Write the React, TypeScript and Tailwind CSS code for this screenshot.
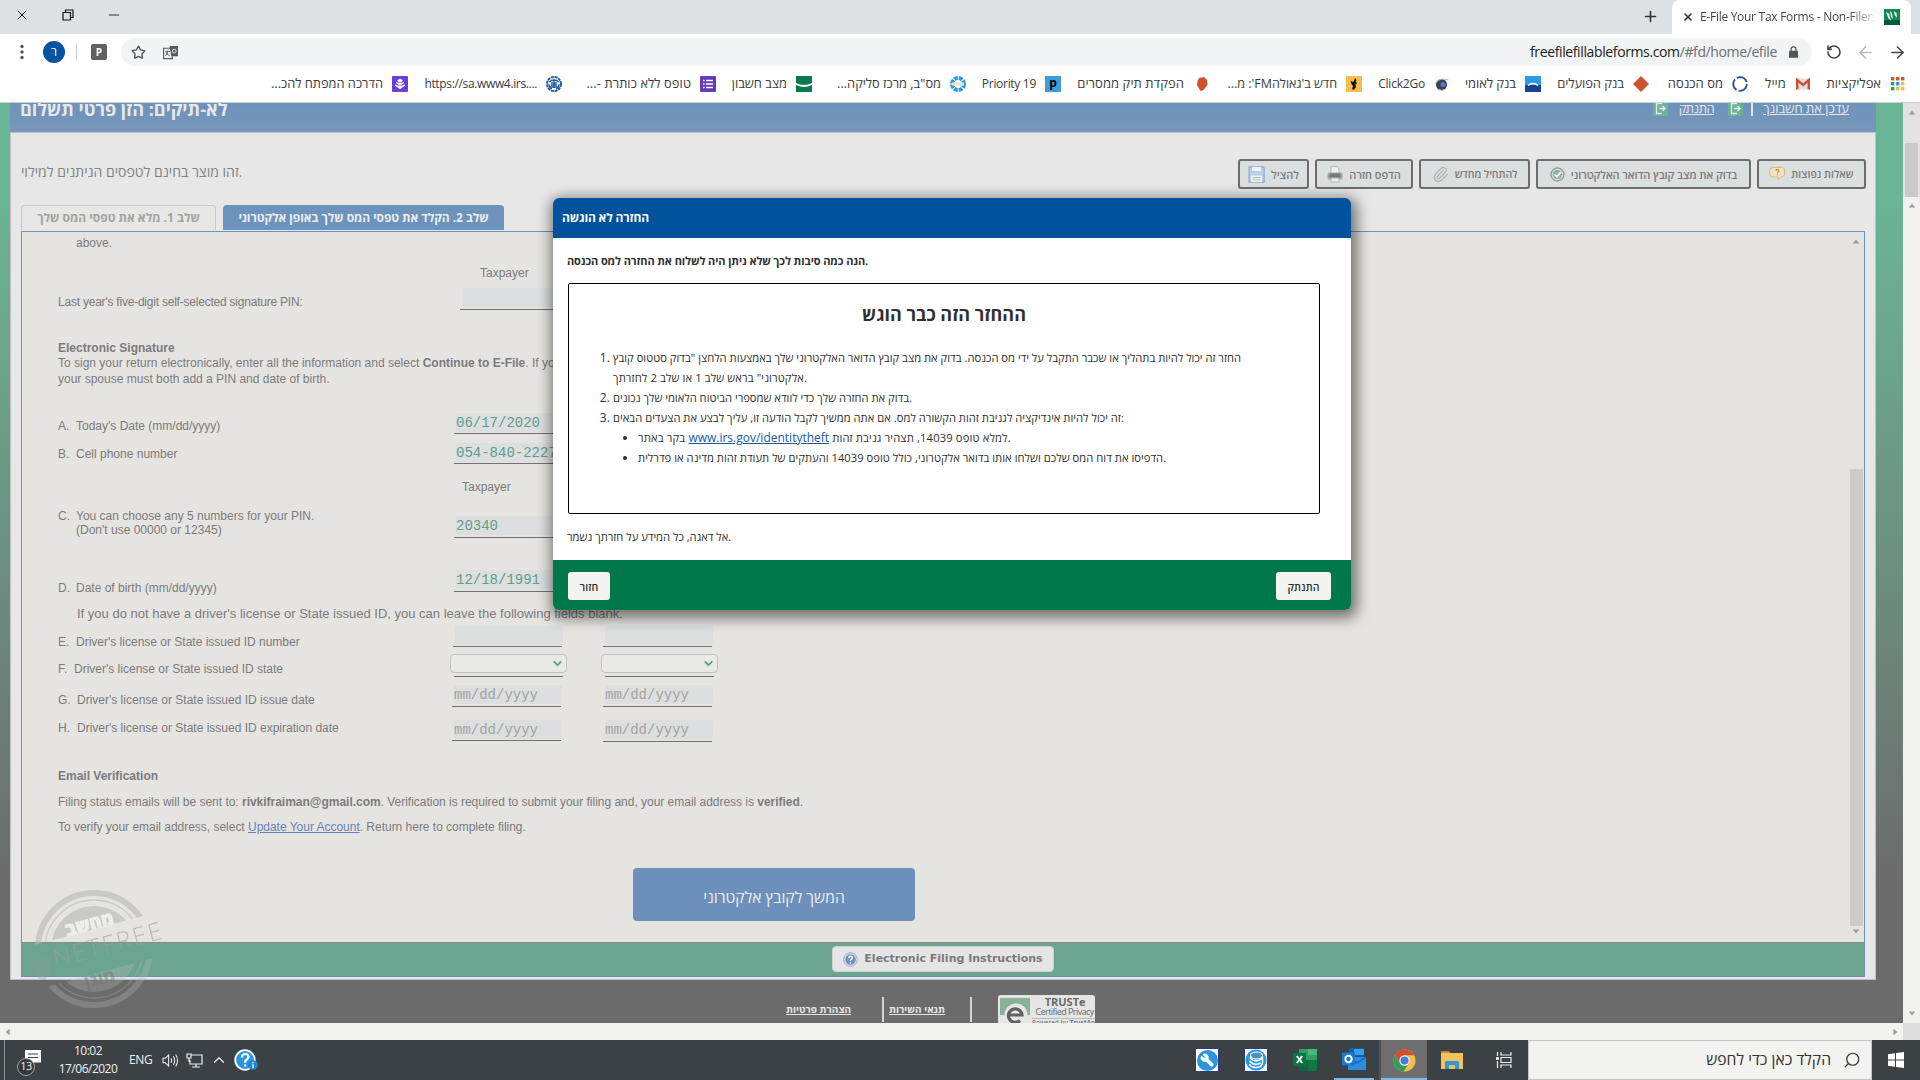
import type { ReactNode } from 'react';
import { ArrowLeft, ArrowRight, ChevronDown, ChevronUp, Minus, Paperclip, Plus, RotateCcw, Save, Search, Star, Wrench, X } from 'lucide-react';

const hebrew = "font-['Open_Sans','Liberation_Sans',sans-serif]";
const arial = "font-['Liberation_Sans',sans-serif]";

interface Bookmark {
  text: string;
  width: string;
  textClass: string;
  dir: 'rtl' | 'ltr';
  icon: ReactNode;
}

const bookmarks: Bookmark[] = [
  {
    text: 'אפליקציות',
    width: 'w-[95px]',
    textClass: 'text-[13px]',
    dir: 'rtl',
    icon: (
      <svg viewBox="0 0 16 16" className="w-4 h-4">
        {[0, 1, 2].map((c) => (
          <g key={c}>
            <rect x={1 + c * 5} y="1" width="3.4" height="3.4" fill="#cf5230" />
            <rect x={1 + c * 5} y="6" width="3.4" height="3.4" fill={['#2f9f63', '#2f9ae0', '#f5bd4f'][c]} />
            <rect x={1 + c * 5} y="11" width="3.4" height="3.4" fill={['#2f9f63', '#f5bd4f', '#f5bd4f'][c]} />
          </g>
        ))}
      </svg>
    ),
  },
  {
    text: 'מייל',
    width: 'w-[63px]',
    textClass: 'text-[13px] tracking-[0.1px]',
    dir: 'rtl',
    icon: (
      <svg viewBox="0 0 16 16" className="w-4 h-4">
        <rect x="1" y="2.5" width="14" height="11" rx="1" fill="#dedede" />
        <path d="M2.2 13.5V4l5.8 5 5.8-5v9.5" fill="none" stroke="#cf5230" strokeWidth="2.4" />
      </svg>
    ),
  },
  {
    text: 'מס הכנסה',
    width: 'w-[99px]',
    textClass: 'text-[13px]',
    dir: 'rtl',
    icon: (
      <svg viewBox="0 0 16 16" className="w-4 h-4">
        <circle cx="8" cy="8" r="6.8" fill="none" stroke="#2450a0" strokeWidth="1.8" strokeDasharray="12 2.24" />
      </svg>
    ),
  },
  {
    text: 'בנק הפועלים',
    width: 'w-[108px]',
    textClass: 'text-[13px] tracking-[-0.1px]',
    dir: 'rtl',
    icon: (
      <svg viewBox="0 0 16 16" className="w-4 h-4">
        <path d="M8 0l8 8-8 8-8-8z" fill="#cf5230" />
      </svg>
    ),
  },
  {
    text: 'בנק לאומי',
    width: 'w-[91px]',
    textClass: 'text-[13px] tracking-[-0.1px]',
    dir: 'rtl',
    icon: (
      <svg viewBox="0 0 16 16" className="w-4 h-4">
        <rect width="16" height="9" fill="#2f9ae0" />
        <rect y="9" width="16" height="7" fill="#1c3f94" />
        <path d="M3 9.5q5-4 10 0" fill="none" stroke="#fff" strokeWidth="1.5" />
      </svg>
    ),
  },
  {
    text: 'Click2Go',
    width: 'w-[88px]',
    textClass: 'text-[12px] tracking-[-0.2px]',
    dir: 'ltr',
    icon: (
      <svg viewBox="0 0 16 16" className="w-4 h-4">
        <circle cx="7.5" cy="8.5" r="5.5" fill="#3a3f55" />
        <circle cx="9" cy="8.5" r="2.5" fill="#5f78c4" />
        <path d="M1.500 7q5-6 13-3M3 13q5 3 9 0" fill="none" stroke="#b9b9b9" />
      </svg>
    ),
  },
  {
    text: "חדש ב'גאולהFM': מ...",
    width: 'w-[153px]',
    textClass: 'text-[12.5px]',
    dir: 'rtl',
    icon: (
      <svg viewBox="0 0 16 16" className="w-4 h-4">
        <rect width="16" height="16" fill="#f7bd4d" />
        <path d="M9 2l1.500 2-1 2 2 1-2 1 .5 3-2 3-2-1 1-3-1.500-2-1-3 3 1z" fill="#111" />
      </svg>
    ),
  },
  {
    text: 'הפקדת תיק ממסרים',
    width: 'w-[148px]',
    textClass: 'text-[13px] tracking-[0.05px]',
    dir: 'rtl',
    icon: (
      <svg viewBox="0 0 16 16" className="w-4 h-4">
        <path d="M6 2l5-1 3 3 .5 5-4 5-3 1-3.500-6 .5-4z" fill="#cf5230" />
      </svg>
    ),
  },
  {
    text: 'Priority 19',
    width: 'w-[95px]',
    textClass: 'text-[12px] tracking-[-0.3px]',
    dir: 'ltr',
    icon: <span className="flex w-4 h-4 bg-[#3d9cdb] items-center justify-center text-[12px] font-bold text-black leading-none pb-0.5">p</span>,
  },
  {
    text: 'מס"ב, מרכז סליקה...',
    width: 'w-[154px]',
    textClass: 'text-[12.8px]',
    dir: 'rtl',
    icon: (
      <svg viewBox="0 0 16 16" className="w-4 h-4">
        <circle cx="8" cy="8" r="6" fill="none" stroke="#2f9ae0" strokeWidth="4" strokeDasharray="3.8 0.92" />
        <rect x="2" y="6.5" width="12" height="3" fill="#e8e2c8" />
      </svg>
    ),
  },
  {
    text: 'מצב חשבון',
    width: 'w-[96px]',
    textClass: 'text-[12.8px]',
    dir: 'rtl',
    icon: (
      <svg viewBox="0 0 16 16" className="w-4 h-4">
        <rect width="16" height="16" fill="#067a4b" />
        <path d="M0 7q8 4 16 0v2q-8 4-16 0z" fill="#fff" />
      </svg>
    ),
  },
  {
    text: 'טופס ללא כותרת -...',
    width: 'w-[154px]',
    textClass: 'text-[12.8px] tracking-[0.1px]',
    dir: 'rtl',
    icon: (
      <svg viewBox="0 0 16 16" className="w-4 h-4">
        <rect width="16" height="16" rx="1" fill="#673ab7" />
        <path d="M3 4.500h1.600M3 8h1.600M3 11.500h1.600M6 4.500h7M6 8h7M6 11.500h7" stroke="#fff" strokeWidth="1.6" />
      </svg>
    ),
  },
  {
    text: 'https://sa.www4.irs....',
    width: 'w-[154px]',
    textClass: 'text-[12px] tracking-[-0.35px]',
    dir: 'ltr',
    icon: (
      <svg viewBox="0 0 16 16" className="w-4 h-4">
        <circle cx="8" cy="8" r="7" fill="none" stroke="#1f5a9e" strokeWidth="2" strokeDasharray="3 0.7" />
        <path d="M3 6q5-4 10 0M8 3v9M5 7h6M4 11h8M5 9h6M3 8q0 4 3 5M13 8q0 4-3 5" fill="none" stroke="#1f5a9e" strokeWidth="1.3" />
      </svg>
    ),
  },
  {
    text: 'הדרכה המפתח להכ...',
    width: 'w-[154px]',
    textClass: 'text-[12.8px]',
    dir: 'rtl',
    icon: (
      <svg viewBox="0 0 16 16" className="w-4 h-4">
        <rect width="16" height="16" rx="1" fill="#673fdb" />
        <path d="M8 3l2.500 1.600L8 6.200 5.500 4.600zM8 7.500l4-1-4 2.700-4-2.700zM8 10.500l5-1.500-5 3.800L3 9z" fill="#fff" stroke="#fff" strokeWidth=".8" />
      </svg>
    ),
  },
];

function BrowserChrome() {
  return (
    <div className="shrink-0">
      <div className="flex h-[34px] bg-[#dde1e4] text-[#111] justify-between">
        <div className="flex items-center pl-[14px] gap-[29px] pb-[5px]">
          <X className="w-[16px] h-[16px]" strokeWidth={1.5} />
          <svg viewBox="0 0 12 12" className="w-[12px] h-[12px] ml-[3px]" fill="none" stroke="#111" strokeWidth="1.2">
            <path d="M1 3.500h7.500V11H1zM3.500 3.500V1H11v7.500H8.500" />
          </svg>
          <Minus className="w-[16px] h-[16px] ml-[3px]" strokeWidth={1.3} />
        </div>
        <div className="flex">
          <Plus className="w-[17px] h-[17px] mt-2 mr-[13px] text-[#333]" strokeWidth={2.2} />
          <div className="flex w-[239px] bg-white rounded-t-lg items-center pl-[10px] mr-[9px]">
            <X className="w-[12px] h-[12px] text-[#333] shrink-0" strokeWidth={3.2} />
            <span className="ml-[6px] w-[175px] overflow-hidden whitespace-nowrap text-[12px] tracking-[-0.28px] bg-gradient-to-r from-[#3c4043] from-85% to-[#3c404322] bg-clip-text text-transparent">
              E-File Your Tax Forms - Non-Filers
            </span>
            <svg viewBox="0 0 16 16" className="w-4 h-4 ml-[9px]">
              <rect width="16" height="16" fill="#0f8a52" />
              <path d="M0 11h16v5H0z" fill="#0a5a3a" />
              <path d="M2 3l3 1.500 2 7-2.500-2zM6 2l2 2 1 6-2-2zM10 2l2.500 2 .5 5-2.500-3z" fill="#e9f4ee" />
            </svg>
          </div>
        </div>
      </div>

      <div className="flex h-[36px] bg-white items-center">
        <svg viewBox="0 0 4 16" className="w-1 h-4 ml-5" fill="#555">
          <circle cx="2" cy="2.5" r="1.7" />
          <circle cx="2" cy="8" r="1.7" />
          <circle cx="2" cy="13.5" r="1.7" />
        </svg>
        <div className="w-[22px] h-[22px] rounded-full bg-[#0353a0] text-white text-[12px] ml-[19px] flex items-center justify-center">ר</div>
        <div className="w-px h-4 bg-[#c8c8c8] ml-[11px]" />
        <div className="w-4 h-4 rounded-[2px] bg-[#5f6061] text-white text-[10px] font-bold ml-[14px] flex items-center justify-center">P</div>
        <div className="flex flex-1 h-[28px] rounded-full bg-[#f1f3f4] items-center justify-between ml-[14px] pl-[10px] pr-[13px]">
          <div className="flex items-center gap-[17px]">
            <Star className="w-[15px] h-[15px] text-[#555]" strokeWidth={2.2} />
            <svg viewBox="0 0 16 16" className="w-[15px] h-[15px]">
              <path d="M7 1h9v11H9z" fill="#5a5a5a" />
              <path d="M.6 3.500h7.400l2 11H.6z" fill="#f1f3f4" stroke="#5a5a5a" strokeWidth="1.2" />
              <path d="M2.500 7h5M5 6v1q-.5 3-2.500 4.500M3.500 8q1 2.500 3.500 3.500" fill="none" stroke="#5a5a5a" />
              <circle cx="12" cy="6.5" r="2" fill="none" stroke="#f1f3f4" />
            </svg>
          </div>
          <div className="flex items-center gap-[12px]">
            <span className="text-[14px] tracking-[-0.38px] text-[#6b6f73] pb-px">
              <span className="text-[#222]">freefilefillableforms.com</span>/#fd/home/efile
            </span>
            <svg viewBox="0 0 10 13" className="w-[9px] h-[12px] mr-px">
              <rect y="5" width="10" height="8" rx="1" fill="#555" />
              <path d="M2.300 5.500V3.500a2.700 2.700 0 015.400 0v2" fill="none" stroke="#555" strokeWidth="1.4" />
            </svg>
          </div>
        </div>
        <RotateCcw className="w-4 h-4 text-[#444] ml-[14px]" strokeWidth={2.4} />
        <ArrowLeft className="w-[19px] h-[19px] text-[#b9b9b9] ml-[14px]" strokeWidth={2} />
        <ArrowRight className="w-[19px] h-[19px] text-[#444] ml-[13px] mr-[13px]" strokeWidth={2} />
      </div>

      <div dir="rtl" className="flex h-[33px] bg-white border-b border-[#cfcfcf] pr-[14px] items-center pb-1 text-[#3a3d40]">
        {bookmarks.map((b) => (
          <div key={b.text} className={`flex items-center gap-[9px] shrink-0 ${b.width}`}>
            {b.icon}
            <span dir={b.dir} className={`whitespace-nowrap ${b.textClass}`}>
              {b.text}
            </span>
          </div>
        ))}
      </div>
    </div>
  );
}

function LogoutIcon() {
  return (
    <svg viewBox="0 0 15 15" className="w-[15px] h-[15px]">
      <rect width="15" height="15" rx="1" fill="#6bb395" />
      <path d="M9 2.500H3.500v10H9M6 7.500h6M9.500 5L12 7.500 9.500 10" fill="none" stroke="#e9e9e9" strokeWidth="1.3" />
    </svg>
  );
}

function PrinterIcon() {
  return (
    <svg viewBox="0 0 16 17" className="w-4 h-[17px]">
      <path d="M4 .5h6l2 2.500v6H4z" fill="#f0f0f0" stroke="#aaa" strokeWidth=".8" />
      <rect x=".5" y="6.5" width="15" height="7" rx="1.5" fill="#a6a6a6" />
      <rect x="2.5" y="7.5" width="11" height="4" fill="#777" />
      <path d="M4 12h8v4H4z" fill="#eee" stroke="#aaa" strokeWidth=".8" />
    </svg>
  );
}

function FloppyIcon() {
  return (
    <svg viewBox="0 0 17 17" className="w-[17px] h-[17px]">
      <path d="M1 .8h14l1.200 1.200v14.200H1z" fill="#b9d0e4" stroke="#8bb0d2" strokeWidth="1.2" />
      <rect x="4" y="1" width="9" height="4" fill="#eef2f5" />
      <rect x="3" y="9.5" width="11" height="6.5" fill="#f0f1f1" />
      <path d="M4.500 11.500h8M4.500 13.800h8" stroke="#b5b5b5" />
    </svg>
  );
}

const toolbar: { text: string; width: string; textClass: string; icon: ReactNode }[] = [
  { text: 'להציל', width: 'w-[71px]', textClass: 'text-[11px]', icon: <FloppyIcon /> },
  { text: 'הדפס חזרה', width: 'w-[98px]', textClass: 'text-[11px] tracking-[-0.1px]', icon: <PrinterIcon /> },
  {
    text: 'להתחיל מחדש',
    width: 'w-[111px]',
    textClass: 'text-[10.5px] tracking-[-0.1px]',
    icon: <Paperclip className="w-[17px] h-[17px] text-[#aaa]" strokeWidth={1.5} />,
  },
  {
    text: 'בדוק את מצב קובץ הדואר האלקטרוני',
    width: 'w-[215px]',
    textClass: 'text-[11px] tracking-[-0.1px]',
    icon: (
      <svg viewBox="0 0 16 16" className="w-[15px] h-[15px]">
        <circle cx="8" cy="8" r="7" fill="#cfd6d3" stroke="#8f9a96" strokeWidth="1.4" />
        <circle cx="8" cy="8" r="4.8" fill="#8fb0a2" />
        <path d="M5 8l2.300 2.500L11.500 5.500" fill="none" stroke="#fff" strokeWidth="1.8" />
      </svg>
    ),
  },
  {
    text: 'שאלות נפוצות',
    width: 'w-[109px]',
    textClass: 'text-[10.5px]',
    icon: (
      <svg viewBox="0 0 16 16" className="w-4 h-4">
        <path d="M4 1.500h9a2.500 2.500 0 012.500 2.500v4a2.500 2.500 0 01-2.500 2.500h-1L9 14v-3H4A3 3 0 01.8 8V4.500a3 3 0 013.200-3z" fill="#f3e3c4" stroke="#d8b98a" />
        <path d="M6.800 4.500q1.700-2 3 0 .3 1.200-1.500 2.200M8.300 8.200v1" fill="none" stroke="#c4914c" strokeWidth="1.3" />
      </svg>
    ),
  },
];

interface FieldProps {
  value?: string;
  placeholder?: string;
  className?: string;
  gap?: string;
}

function Field({ value, placeholder, className = '', gap = 'pb-px' }: FieldProps) {
  return (
    <div className={`w-[109px] h-fit border-b border-[#6f7072] ${gap} ${className}`}>
      <div className="ml-[2px] -mr-[1px] h-[19px] rounded-[3px] bg-[#dcdedf] font-['Liberation_Mono',monospace] text-[14px] leading-[21px] text-[#5e9f8a] whitespace-nowrap">
        {value}
        {placeholder && <span className="text-[#a3a39d]">{placeholder}</span>}
      </div>
    </div>
  );
}

function SelectField({ className = '' }: { className?: string }) {
  return (
    <div className={`w-[117px] h-[22px] flex justify-center -ml-[3px] ${className}`}>
      <div className="w-[109px] border-b border-[#6f7072] h-[23px]">
        <div className="w-[117px] -ml-[4px] h-[19px] rounded-[4px] border border-[#c2c2c0] bg-[#e9e9e7] flex items-center justify-end pr-[2px]">
          <ChevronDown className="w-[13px] h-[13px] text-[#5aa386]" strokeWidth={3.5} />
        </div>
      </div>
    </div>
  );
}

interface RowProps {
  letter: string;
  label: ReactNode;
  height: string;
  labelTop: string;
  children: ReactNode;
}

function Row({ letter, label, height, labelTop, children }: RowProps) {
  return (
    <div className={`flex items-start ${height}`}>
      <div className={`flex w-[395px] shrink-0 ${labelTop}`}>
        <span className="w-[18px]">{letter}.</span>
        <span>{label}</span>
      </div>
      {children}
    </div>
  );
}

function ScrollArrow({ dir }: { dir: 'up' | 'down' | 'left' | 'right' }) {
  const shapes = { up: 'M5 2l4 5H1z', down: 'M1 2h8L5 7z', left: 'M7 1v8L2 5z', right: 'M3 1l5 4-5 4z' };
  return (
    <svg viewBox="0 0 10 10" className="w-[8px] h-[8px] shrink-0" fill="#9b9b9b">
      <path d={shapes[dir]} />
    </svg>
  );
}

function TaxForm() {
  return (
    <div className={`flex flex-col flex-1 pl-[36px] text-[12px] leading-4 text-[#7b7b7d] whitespace-nowrap ${arial}`}>
      <div className="h-[22px] pl-[18px] pt-[3px]">above.</div>
      <div className="h-[34px] pl-[422px] pt-[11px]">Taxpayer</div>
      <div className="flex h-[22px]">
        <div className="w-[402px] pt-[6px] tracking-[-0.22px]">Last year's five-digit self-selected signature PIN:</div>
        <Field gap="pb-[2px]" />
      </div>
      <div className="h-[99px] pt-[30px]">
        <p className="font-bold">Electronic Signature</p>
        <p className="leading-[15px]">
          To sign your return electronically, enter all the information and select <b>Continue to E-File</b>. If you are filing jointly, you and
        </p>
        <p>your spouse must both add a PIN and date of birth.</p>
      </div>
      <Row letter="A" label="Today's Date (mm/dd/yyyy)" height="h-[31px]" labelTop="pt-[9px]">
        <Field value="06/17/2020" className="mt-[4px] ml-px" />
      </Row>
      <Row letter="B" label="Cell phone number" height="h-[30px]" labelTop="pt-[6px]">
        <Field value="054-840-2227" className="mt-[3px] ml-px" />
      </Row>
      <div className="h-[35px] pl-[404px] pt-[9px]">Taxpayer</div>
      <Row
        letter="C"
        height="h-[55px]"
        labelTop="pt-[4px] leading-[14px]"
        label={
          <>
            You can choose any 5 numbers for your PIN.
            <br />
            (Don't use 00000 or 12345)
          </>
        }
      >
        <Field value="20340" className="mt-[11px] ml-px" gap="pb-[2px]" />
      </Row>
      <Row letter="D" label="Date of birth (mm/dd/yyyy)" height="h-[40px]" labelTop="pt-[20px]">
        <Field value="12/18/1991" className="mt-[10px] ml-px" gap="pb-[2px]" />
      </Row>
      <div className="h-[24px] pl-[19px] pt-[6px] text-[13px]">
        If you do not have a driver's license or State issued ID, you can leave the following fields blank.
      </div>
      <Row letter="E" label="Driver's license or State issued ID number" height="h-[28px]" labelTop="pt-[10px]">
        <Field className="mt-[2px]" />
        <Field className="mt-[2px] ml-[41px]" />
      </Row>
      <Row letter="F" label={<span className="-ml-0.5">Driver's license or State issued ID state</span>} height="h-[30px]" labelTop="pt-[9px]">
        <SelectField className="mt-[2px]" />
        <SelectField className="mt-[2px] ml-[34px]" />
      </Row>
      <Row letter="G" label={<span className="ml-px">Driver's license or State issued ID issue date</span>} height="h-[34px]" labelTop="pt-[10px]">
        <Field placeholder="mm/dd/yyyy" className="mt-[3px] -ml-px" gap="pb-[2px]" />
        <Field placeholder="mm/dd/yyyy" className="mt-[3px] ml-[42px]" gap="pb-[2px]" />
      </Row>
      <Row letter="H" label={<span className="ml-px">Driver's license or State issued ID expiration date</span>} height="h-[44px]" labelTop="pt-[4px]">
        <Field placeholder="mm/dd/yyyy" className="mt-[4px] -ml-px" />
        <Field placeholder="mm/dd/yyyy" className="mt-[4px] ml-[42px]" gap="pb-[2px]" />
      </Row>
      <p className="h-[32px] pt-[8px] font-bold">Email Verification</p>
      <p className="h-[25px] pt-[2px] tracking-[-0.02px]">
        Filing status emails will be sent to: <b>rivkifraiman@gmail.com</b>. Verification is required to submit your filing and, your email address is <b>verified</b>.
      </p>
      <p className="h-[26px] pt-[2px] tracking-[-0.02px]">
        To verify your email address, select <a className="text-[#6583b8] underline">Update Your Account</a>. Return here to complete filing.
      </p>
      <button className={`mt-[25px] ml-[575px] w-[282px] h-[53px] pt-[4px] rounded-[4px] bg-[#6c8fbc] text-[#ececec] text-[15.700px] ${hebrew}`}>המשך לקובץ אלקטרוני</button>
    </div>
  );
}

function SubmissionModal() {
  return (
    <div className="absolute left-[553px] top-[198px] w-[798px] h-[412px] flex flex-col rounded-[6px] overflow-hidden bg-white shadow-[2px_4px_14px_4px_rgba(0,0,0,0.5)] text-[#2f2f2f] text-[11.2px] leading-5">
      <div className="h-[40px] shrink-0 bg-[#00529c] text-white font-bold text-[12px] tracking-[-0.15px] flex items-center pl-[9px]">החזרה לא הוגשה</div>
      <div className="flex-1 pl-[15px] pr-[31px] pt-[13px]">
        <p className="font-bold text-[11px] tracking-[-0.1px] -ml-px">הנה כמה סיבות לכך שלא ניתן היה לשלוח את החזרה למס הכנסה.</p>
        <div className="mt-[12px] h-[231px] border border-black rounded-[2px] pt-[16px] pl-[44px]">
          <h2 className="text-center text-[18px] font-bold leading-7 mr-[44px]">ההחזר הזה כבר הוגש</h2>
          <ol className="mt-[20px] whitespace-nowrap list-decimal marker:text-[12px]">
            <li>
              החזר זה יכול להיות בתהליך או שכבר התקבל על ידי מס הכנסה. בדוק את מצב קובץ הדואר האלקטרוני שלך באמצעות הלחצן "בדוק סטטוס קובץ
              <br />
              <span className="tracking-[0.12px]">אלקטרוני" בראש שלב 1 או שלב 2 לחזרתך.</span>
            </li>
            <li>בדוק את החזרה שלך כדי לוודא שמספרי הביטוח הלאומי שלך נכונים.</li>
            <li>
              <span className="tracking-[0.02px]">זה יכול להיות אינדיקציה לגניבת זהות הקשורה למס. אם אתה ממשיך לקבל הודעה זו, עליך לבצע את הצעדים הבאים:</span>
              <ul className="list-disc pl-[25px]">
                <li>
                  <span className="tracking-[0.15px]">בקר באתר </span>
                  <a className="text-[12px] leading-none text-[#1a5a9e] underline">www.irs.gov/identitytheft</a>
                  <span className="tracking-[0.15px]"> למלא טופס 14039, תצהיר גניבת זהות.</span>
                </li>
                <li className="tracking-[0.03px]">הדפיסו את דוח המס שלכם ושלחו אותו בדואר אלקטרוני, כולל טופס 14039 והעתקים של תעודת זהות מדינה או פדרלית.</li>
              </ul>
            </li>
          </ol>
        </div>
        <p className="mt-[13px] -ml-px">אל דאגה, כל המידע על חזרתך נשמר.</p>
      </div>
      <div className="h-[50px] shrink-0 bg-[#00784c] flex items-center justify-between pl-[15px] pr-[20px] pt-px text-[10.5px] font-semibold">
        <button className="w-[42px] h-[28px] rounded-[3px] bg-[#f3f3f1] pt-[3px]">חזור</button>
        <button className="w-[55px] h-[28px] rounded-[3px] bg-[#f3f3f1] pt-[3px]">התנתק</button>
      </div>
    </div>
  );
}

function Watermark() {
  return (
    <svg viewBox="-70 -70 150 140" className={`absolute left-[24px] top-[879px] w-[150px] h-[140px] opacity-60 ${hebrew}`}>
      <defs>
        <clipPath id="aboveBand">
          <path d="M-80-80H90V-44L-80 1.600z" />
        </clipPath>
        <clipPath id="belowBand">
          <path d="M-80 46.500L90 1V80H-80z" />
        </clipPath>
      </defs>
      {['aboveBand', 'belowBand'].map((clip) => (
        <g key={clip} clipPath={`url(#${clip})`} opacity={clip === 'aboveBand' ? 1 : 0.5}>
          <circle r="56" fill="none" stroke="#b8b8b8" strokeWidth="6" />
          <circle r="49" fill="none" stroke="#b8b8b8" strokeWidth="1.3" />
          <circle r="43" fill="#b8b8b8" />
        </g>
      ))}
      <g transform="rotate(-15)">
        <text x="2" y="-19" textAnchor="middle" fontSize="18" fontWeight="800" fill="#f4f4f2" stroke="#f4f4f2" strokeWidth=".8">מחשב</text>
        <text x="-2" y="36" textAnchor="middle" fontSize="17" fontWeight="800" fill="#7c8a84">מוגן</text>
        <text x="-42" y="8" fontSize="25" fontWeight="300" fill="#9aa09d" textLength="112">NETFREE</text>
        <path d="M-66-2l10-4 10 4q1 14-10 19-11-5-10-19z" fill="#8a9a94" opacity=".6" />
      </g>
    </svg>
  );
}

function WebPage() {
  return (
    <div className="flex h-[920px] shrink-0">
      <div className="w-[1903px] flex flex-col bg-gradient-to-b from-[#6bb597] from-10% via-[#6b8f81] via-50% to-[#6b6b6b] to-85% pl-[10px] pr-[27px] overflow-hidden">
        <header className="flex h-[29px] shrink-0 bg-gradient-to-b from-[#6c93bb] to-[#7896bb] text-[#e8e8e8] justify-between overflow-hidden">
          <h1 className="text-[18px] font-bold leading-6 pl-[10px] -mt-[6px]">לא-תיקים: הזן פרטי תשלום</h1>
          <div className="flex text-[13px] leading-[14px] pr-[27px] -mt-[2px]">
            <LogoutIcon />
            <a className="underline ml-[11px] tracking-[-0.5px]">התנתק</a>
            <span className="ml-[14px]">
              <LogoutIcon />
            </span>
            <span className="w-[2px] h-[13px] bg-[#e3e3e3] ml-[8px] mt-[2px]" />
            <a className="underline ml-[10px]">עדכן את חשבונך</a>
          </div>
        </header>

        <main className="h-[848px] shrink-0 flex flex-col bg-[#e7e7e7] border border-[#bfbfbf] px-[10px]">
          <div className="flex justify-between pt-[26px] h-[72px]">
            <p className="text-[14px] text-[#828282] leading-5 pt-[3px]">זהו מוצר בחינם לטפסים הניתנים למילוי.</p>
            <div className="flex gap-[6px] -mr-px">
              {toolbar.map((item) => (
                <button
                  key={item.text}
                  className={`h-[30px] border-2 border-[#6d6d6d] rounded-[3px] bg-[#dcdfe0] flex items-center justify-center gap-[6px] font-semibold text-[#7d7a76] whitespace-nowrap ${item.width} ${item.textClass}`}
                >
                  {item.icon}
                  <span className="pt-[2px]">{item.text}</span>
                </button>
              ))}
            </div>
          </div>

          <div className="flex h-[26px] gap-[7px] text-[12px] font-bold">
            <div className="w-[195px] h-[25px] rounded-t-[4px] border border-b-0 border-[#c6c9c6] text-[#a2a49a] flex items-center justify-center">שלב 1. מלא את טפסי המס שלך</div>
            <div className="w-[281px] h-[25px] rounded-t-[4px] bg-[#6c93bb] text-[#ececec] flex items-center justify-center tracking-[-0.06px]">שלב 2. הקלד את טפסי המס שלך באופן אלקטרוני</div>
          </div>

          <div className="h-[746px] shrink-0 flex flex-col border border-[#6c93bb] bg-[#e5e4e0]">
            <div className="flex flex-1">
              <TaxForm />
              <div className="w-[16px] flex flex-col items-center justify-between py-[6px] bg-[#e4e4e2]">
                <ScrollArrow dir="up" />
                <div className="w-[13px] h-[457px] bg-[#cbcbca] mt-[220px]" />
                <ScrollArrow dir="down" />
              </div>
            </div>
            <div className="h-[34px] shrink-0 border-t border-[#868c88] bg-[#6ba592] flex justify-center">
              <button className="w-[222px] h-[26px] mt-[3px] rounded-[4px] bg-[#e5e5e5] border border-[#cfcfcf] flex items-center justify-center gap-[6px] text-[#7a7a7a] font-['DejaVu_Sans',sans-serif] text-[11px] font-bold whitespace-nowrap">
                <svg viewBox="0 0 16 16" className="w-[15px] h-[15px] mt-px">
                  <circle cx="8" cy="8" r="7.3" fill="#d5dbe2" stroke="#a7adb5" />
                  <circle cx="8" cy="8" r="5.5" fill="#6d94c0" />
                  <path d="M6 6.500q.3-2 2-2t2 1.500q0 1.200-2 2.500v1M8 11v1.200" fill="none" stroke="#fff" strokeWidth="1.4" />
                </svg>
                Electronic Filing Instructions
              </button>
            </div>
          </div>
        </main>

        <footer className="flex pl-[776px] text-[10px] font-bold text-[#e6e6e6]">
          <a className="underline mt-[21px] w-[96px] leading-4">הצהרת פרטיות</a>
          <span className="w-[2px] h-[25px] mt-[17px] bg-[#d5d5d5]" />
          <a className="underline mt-[21px] ml-[5px] w-[81px] leading-4">תנאי השירות</a>
          <span className="w-[2px] h-[25px] mt-[17px] bg-[#d5d5d5]" />
          <div className="w-[97px] h-[40px] ml-[26px] mt-[15px] rounded-[3px] bg-[#e4e5e4] flex text-[#6a6a6a] overflow-hidden">
            <svg viewBox="0 0 34 34" className="w-[34px] h-[34px] shrink-0">
              <rect x="2" y="3" width="30" height="17" fill="#88b295" />
              <circle cx="18" cy="20" r="11.5" fill="#e4e5e4" />
              <path d="M12 20h12a6.800 6.800 0 10-2 5.500" fill="none" stroke="#626262" strokeWidth="3.2" />
            </svg>
            <div className="pt-[1px] text-center whitespace-nowrap">
              <div className="text-[11px] leading-[11px] pl-px">TRUSTe</div>
              <div className="text-[9px] leading-[10px] font-normal tracking-[-0.55px]">Certified Privacy</div>
              <div className="text-[6.500px] leading-[7px] font-normal mt-px border-t border-[#bbb]">
                Powered by <b className="text-[#5f7fa5]">TrustArc</b>
              </div>
            </div>
          </div>
        </footer>
      </div>

      <div className="w-[17px] flex flex-col items-center bg-[#f2f2f0]">
        <div className="w-full h-[40px] bg-[#e3e3e3] flex justify-center pt-[6px]">
          <ScrollArrow dir="up" />
        </div>
        <div className="w-[13px] h-[54px] bg-[#c9c9c9] shadow-[0_0_0_2px_#e3e3e3]" />
        <div className="flex-1 w-full flex flex-col items-center justify-between bg-[#f2f2f0] pt-[5px] pb-[5px]">
          <ScrollArrow dir="up" />
          <ScrollArrow dir="down" />
        </div>
      </div>
    </div>
  );
}

function Taskbar() {
  return (
    <div className="flex h-[40px] shrink-0 bg-[#3c4145] text-[#f0f0f0] items-center justify-between">
      <div className="flex items-center h-full text-[12px]">
        <div className="w-px h-full bg-[#8b8e90] ml-1" />
        <div className="relative ml-[20px] w-4 h-[17px] mb-1">
          <svg viewBox="0 0 16 17" className="w-4 h-[17px]">
            <path d="M0 0h16v12.500H9l-4 4v-4H0z" fill="#fff" />
            <path d="M3 4h10M3 7.500h10" stroke="#3c4145" strokeWidth="1.2" />
          </svg>
          <span className="absolute -left-[8px] top-[8px] w-[18px] h-[18px] rounded-full bg-[#33383b] border border-[#a5a5a5] text-[11px] tracking-[-0.5px] flex items-center justify-center">13</span>
        </div>
        <div className="w-[60px] ml-[17px] text-center leading-[18px] tracking-[-0.5px]">
          <div>10:02</div>
          <div>17/06/2020</div>
        </div>
        <span className="ml-[11px] tracking-[-0.4px]">ENG</span>
        <svg viewBox="0 0 18 16" className="w-[17px] h-[15px] ml-[10px]" fill="none" stroke="#eee" strokeWidth="1.1">
          <path d="M1 5.500h2.500L7 2v12l-3.500-3.500H1zM9.500 5.500q1.500 2.500 0 5M12 3.500q3 4.500 0 9M14.500 1.500q4 6.500 0 13" />
        </svg>
        <svg viewBox="0 0 17 15" className="w-[17px] h-[15px] ml-[7px]" fill="none" stroke="#eee" strokeWidth="1.2">
          <path d="M5 2h11v9H4V7M10 11v3M6 14h8M1 1h4v4H1zM3 5v4" />
        </svg>
        <ChevronUp className="w-[18px] h-[18px] ml-[7px]" strokeWidth={1.6} />
        <svg viewBox="0 0 24 22" className="w-[24px] h-[22px] ml-[6px]">
          <circle cx="11" cy="11" r="9.8" fill="#2a96dc" stroke="#fff" strokeWidth="1.8" />
          <path d="M7.800 8.500q.3-3.500 3.400-3.500t3.300 2.800q0 2-3.300 4v2M11.200 15.500v2" fill="none" stroke="#fff" strokeWidth="2.2" />
          <circle cx="19" cy="16" r="4.8" fill="#1f86d0" />
          <path d="M19 13v1.200M19 15.200v4" stroke="#fff" strokeWidth="1.3" />
        </svg>
      </div>

      <div className="flex items-center h-full">
        <div className="flex w-6 h-6 bg-white border border-[#2b3a8f] items-center justify-center mr-[25px]">
          <span className="w-[21px] h-[21px] rounded-full bg-[#2a96dc] flex items-center justify-center">
            <Wrench className="w-[14px] h-[14px] text-white fill-white -scale-x-100" />
          </span>
        </div>
        <svg viewBox="0 0 24 24" className="w-6 h-6 mr-[25px]">
          <rect x=".5" y=".5" width="23" height="23" fill="#fff" stroke="#2b3a8f" />
          <circle cx="12" cy="12" r="10.5" fill="#2a96dc" />
          <ellipse cx="12.5" cy="7.5" rx="6" ry="3.5" fill="#4c8fc0" stroke="#fff" strokeWidth="1.2" />
          <path d="M6.500 8v2.500q6 5 12-.5v5q-1 4.500-6.500 4.500T5.500 16M5.500 13q5 5.500 11 2" fill="none" stroke="#fff" strokeWidth="1.5" />
        </svg>
        <svg viewBox="0 0 24 22" className="w-6 h-[22px] mr-[17px]">
          <rect x="6" width="18" height="22" fill="#2fa061" />
          <path d="M15 0h9v6h-9z" fill="#49b97b" />
          <path d="M6 11h9v11H6z" fill="#12663c" />
          <path d="M15 11h9v11h-9z" fill="#0d7a45" />
          <rect y="4" width="13" height="13" fill="#0a7443" />
          <path d="M3.800 7l5.400 7M9.200 7l-5.400 7" stroke="#fff" strokeWidth="1.9" />
        </svg>
        <div className="w-[40px] h-full border-b-2 border-[#86b8dd] flex items-center justify-center">
          <svg viewBox="0 0 24 22" className="w-6 h-[22px]">
            <path d="M7 0h15v9H7z" fill="#0f5fb0" />
            <path d="M12 1h10v6H12z" fill="#3aa0e6" />
            <path d="M6 9h18v13H6z" fill="#2c8fdd" />
            <path d="M6 9l9 6 9-6" fill="none" stroke="#1867b4" strokeWidth="1.5" />
            <rect y="4.5" width="13" height="13" fill="#1a78cf" />
            <circle cx="6.5" cy="11" r="3.2" fill="none" stroke="#fff" strokeWidth="2" />
          </svg>
        </div>
        <div className="w-[5px]" />
        <div className="w-[48px] h-full bg-[#6f6e6e] border-l-2 border-[#55514f] shadow-[inset_0_-2px_0_#86b8dd] flex items-center justify-center">
          <svg viewBox="0 0 24 24" className="w-[23px] h-[23px]">
            <circle cx="12" cy="12" r="11.5" fill="#f5bd4a" />
            <path d="M12 .5A11.500 11.500 0 002 6.200l5 8.700L12 6.500h10A11.500 11.500 0 0012 .5z" fill="#d0502e" />
            <path d="M2 6.200A11.500 11.500 0 0011.300 23.500l5-8.700-4.300 2.500-5-2.500z" fill="#2f9f57" />
            <circle cx="12" cy="12" r="5.4" fill="#efefef" />
            <circle cx="12" cy="12" r="4.2" fill="#3d82d8" />
          </svg>
        </div>
        <svg viewBox="0 0 22 20" className="w-[22px] h-[20px] ml-[14px]">
          <path d="M0 1h8l2 3H0z" fill="#d8822d" />
          <path d="M0 3h22v16H0z" fill="#f7c25a" />
          <path d="M4 19v-7q0-1 1-1h12q1 0 1 1v7h-4v-4H8v4z" fill="#3097dc" />
        </svg>
        <svg viewBox="0 0 16 16" className="w-4 h-4 ml-[33px] mr-[16px]" fill="none" stroke="#eee" strokeWidth="1.2">
          <path d="M1.500 0v4M1.500 9v7M5 0v3h10V0M5 16v-3h10v3M5 5.500h10v5H5z" />
          <path d="M0 6.500h3" stroke="#fff" strokeWidth="2.5" />
        </svg>
        <div className="w-[344px] h-full bg-[#f3f3f1] border border-[#c5c5c5] flex items-center justify-end pr-[10px] text-[#333]">
          <span className="text-[15.700px]">הקלד כאן כדי לחפש</span>
          <Search className="w-[18px] h-[18px] ml-[12px] -scale-x-100" strokeWidth={1.6} />
        </div>
        <svg viewBox="0 0 16 16" className="w-4 h-4 mx-4" fill="#fff">
          <path d="M0 2.200l7-1v6.300H0zM8 1l8-1v7.500H8zM0 8.500h7v6.300l-7-1zM8 8.500h8V16l-8-1z" />
        </svg>
      </div>
    </div>
  );
}

export default function App() {
  return (
    <div className={`relative w-[1920px] h-[1080px] overflow-hidden flex flex-col ${hebrew}`}>
      <BrowserChrome />
      <WebPage />
      <div className="flex h-[17px] shrink-0 bg-[#f2f2f0]">
        <div className="w-[1903px] flex items-center justify-between px-[4px]">
          <ScrollArrow dir="left" />
          <ScrollArrow dir="right" />
        </div>
        <div className="w-[17px] bg-[#dcdcdc]" />
      </div>
      <Taskbar />
      <SubmissionModal />
      <Watermark />
    </div>
  );
}
